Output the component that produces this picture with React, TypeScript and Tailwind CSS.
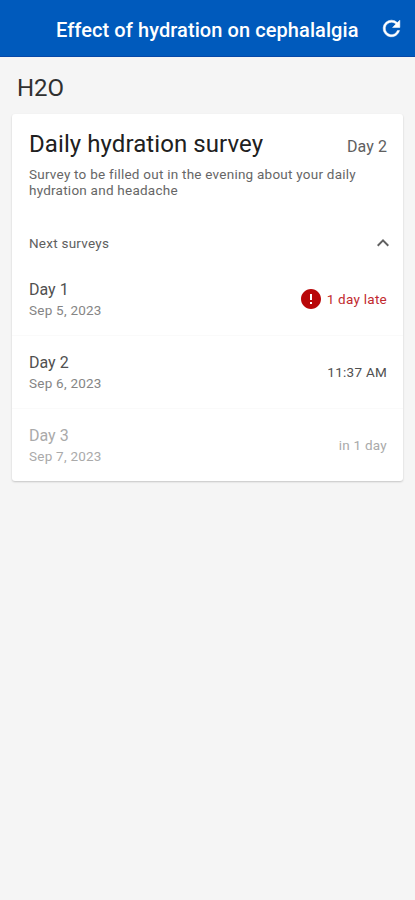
import { MdError, MdKeyboardArrowUp } from "react-icons/md";

type Survey = {
  day: string;
  date: string;
  due: string;
  status: "late" | "open" | "upcoming";
};

const surveys: Survey[] = [
  { day: "Day 1", date: "Sep 5, 2023", due: "1 day late", status: "late" },
  { day: "Day 2", date: "Sep 6, 2023", due: "11:37 AM", status: "open" },
  { day: "Day 3", date: "Sep 7, 2023", due: "in 1 day", status: "upcoming" },
];

export default function App() {
  return (
    <div className="min-h-screen bg-[#f5f5f5] font-[Roboto,sans-serif] text-[#303030]">
      <header className="flex h-[57px] items-center justify-between border-b border-[#0648a8] bg-[#005abc] pt-[3px] pr-[11px] pl-14 text-white">
        <h1 className="text-xl font-medium tracking-[0.08px] whitespace-nowrap">
          Effect of hydration on cephalalgia
        </h1>
        <button aria-label="Refresh" className="pb-0.5">
          <RefreshIcon />
        </button>
      </header>

      <main className="px-3">
        <h2 className="flex h-[57px] items-center pt-1 pl-[5px] text-2xl">H2O</h2>

        <section className="h-[367px] rounded-[3px] bg-white pt-[14px] shadow-[0_1px_2px_rgba(0,0,0,0.2)]">
          <div className="h-[92px] pr-4 pl-[17px]">
            <div className="flex items-center justify-between">
              <h3 className="text-2xl leading-8 tracking-[0.08px] text-[#202020]">Daily hydration survey</h3>
              <span className="pt-1.5 text-base tracking-[0.1px] text-[#606060]">Day 2</span>
            </div>
            <p className="mt-1.5 text-[13.5px] leading-4 tracking-[0.24px] text-[#666]">
              Survey to be filled out in the evening about your daily hydration and headache
            </p>
          </div>

          <button className="flex h-[43px] w-full items-center justify-between pt-[3px] pr-2 pl-[17px] text-[13.5px] tracking-[0.24px] text-[#606060]">
            Next surveys
            <MdKeyboardArrowUp size={24} />
          </button>

          {surveys.map((survey) => (
            <SurveyRow key={survey.day} survey={survey} />
          ))}
        </section>
      </main>
    </div>
  );
}

function SurveyRow({ survey }: { survey: Survey }) {
  const { day, date, due, status } = survey;
  const upcoming = status === "upcoming";

  return (
    <div className="flex h-[73px] items-center justify-between border-b border-[#fafafa] pt-px pr-4 pl-[17px] first-of-type:border-[#f5f5f5] last:border-0">
      <div>
        <p className={`text-base leading-5 ${upcoming ? "text-[#aaa]" : "text-[#505050]"}`}>{day}</p>
        <p className={`text-[13.5px] leading-5 tracking-[0.24px] ${upcoming ? "text-[#aaa]" : "text-[#858585]"}`}>{date}</p>
      </div>
      <DueLabel due={due} status={status} />
    </div>
  );
}

function DueLabel({ due, status }: { due: string; status: Survey["status"] }) {
  const color =
    status === "late"
      ? "text-[#c12a2e]"
      : status === "upcoming"
      ? "text-[#aaa]"
      : "text-[#505050]";

  return (
    <span className={`flex items-center gap-1 pb-px text-[13.5px] tracking-[0.26px] ${color}`}>
      {status === "late" && <MdError size={24} className="text-[#b90709]" />}
      {due}
    </span>
  );
}

function RefreshIcon() {
  return (
    <svg width="25" height="25" viewBox="0 0 24 24" fill="currentColor" stroke="currentColor" strokeWidth="0.5">
      <path d="M17.65 6.35A7.958 7.958 0 0 0 12 4a8 8 0 1 0 7.73 10h-2.08A6 6 0 1 1 12 6c1.66 0 3.14.69 4.22 1.78L13 11h7V4z" />
    </svg>
  );
}
